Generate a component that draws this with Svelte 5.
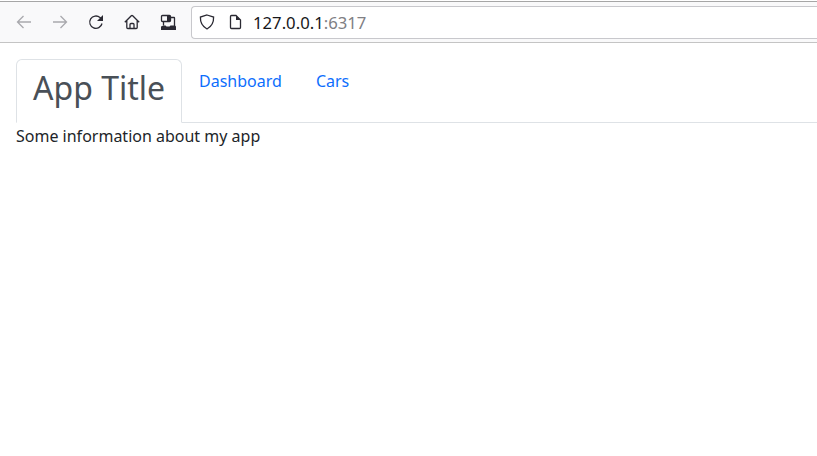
<script>
  const tabs = ['Dashboard', 'Cars'];
</script>

<div class="toolbar">
  <div class="buttons">
    <svg class="btn dim" width="16" height="16" viewBox="0 0 16 16"><path d="M15 8H1.500M7.500 2 1.500 8l6 6" /></svg>
    <svg class="btn dim" width="16" height="16" viewBox="0 0 16 16"><path d="M1 8h13.500M8.500 2l6 6-6 6" /></svg>
    <svg class="btn" width="16" height="16" viewBox="0 0 16 16"><path d="M14 9.500A6.200 6.200 0 1 1 12 3.500L14 5.500" /><path class="fill" d="M15 1v6H9z" /></svg>
    <svg class="btn" width="16" height="16" viewBox="0 0 16 16"><path d="M.8 8.300 7.300 1.800a1 1 0 0 1 1.400 0l6.500 6.500M2.800 6.500v7a1 1 0 0 0 1 1h8.400a1 1 0 0 0 1-1v-7M6 14.500V10.500a1 1 0 0 1 1-1h2a1 1 0 0 1 1 1v4" /></svg>
    <svg class="btn" width="16" height="16" viewBox="0 0 16 16"><path d="M2.500 1.500h7a1 1 0 0 1 1 1v4a1 1 0 0 1-1 1h-7a1 1 0 0 1-1-1v-4a1 1 0 0 1 1-1zM3.500 7.500v4M10.500 3.500h3.500a.5.500 0 0 1 .5.500v8" /><path class="fill" d="M7 2h3v5H7zM3.500 11.500h2l1 1h3l1-1h4.500l1 1V16H1v-3.500z" /></svg>
  </div>
  <div class="urlbar">
    <svg class="shield" width="16" height="16" viewBox="0 0 16 16"><path d="M8 1 14.600 3.100c.2 5.400-2 9.500-6.600 11.900C3.400 12.600 1.200 8.500 1.400 3.100z" /></svg>
    <svg class="doc" width="16" height="16" viewBox="0 0 16 16"><path d="M4.500 1.500h4.500l4.500 4.500v7.500a1 1 0 0 1-1 1H4.500a1 1 0 0 1-1-1v-11a1 1 0 0 1 1-1z" /><path class="fill" d="M9 1.500 13.500 6H9z" /></svg>
    <span class="url">127.0.0.1<span class="port">:6317</span></span>
  </div>
</div>

<div class="page">
  <ul class="nav">
    <li class="title">App Title</li>
    {#each tabs as tab}
      <li><a href="#top" class="link">{tab}</a></li>
    {/each}
  </ul>
  <p>Some information about my app</p>
</div>

<style>
  :global(body) {
    background: #fff;
    font-family: "Noto Sans", "Open Sans", sans-serif;
    overflow: hidden;
  }
  .toolbar {
    box-sizing: border-box;
    height: 42px;
    margin-top: 1px;
    display: flex;
    align-items: center;
    gap: 15px;
    padding-left: 16px;
    background: #f9f9fa;
    border-top: 1px solid #a6a6a6;
    border-bottom: 1px solid #c4c4c4;
  }
  .buttons {
    display: flex;
    gap: 20px;
  }
  .btn {
    flex: none;
  }
  svg path {
    fill: none;
    stroke: #2b2a33;
    stroke-width: 1.3;
  }
  svg path.fill {
    fill: #2b2a33;
    stroke: none;
  }
  .btn.dim path {
    stroke: #a9a9ad;
  }
  .urlbar {
    flex: 1;
    height: 33px;
    margin-right: -8px;
    display: flex;
    align-items: center;
    box-sizing: border-box;
    padding-left: 7px;
    background: #fff;
    border: 1px solid #c8c8cc;
    border-right: none;
    border-radius: 4px 0 0 4px;
  }
  .doc {
    margin-left: 12px;
  }
  .url {
    margin-left: 10px;
    font-size: 16.7px;
    color: #17171a;
  }
  .port {
    color: #808084;
  }
  .page {
    padding: 16px 0 0 16px;
  }
  .nav {
    list-style: none;
    margin: 0;
    padding: 0;
    display: flex;
    height: 64px;
    box-sizing: border-box;
    border-bottom: 1px solid #dee2e6;
  }
  .nav li {
    box-sizing: border-box;
  }
  .title {
    height: 64px;
    padding: 6px 16px 0;
    font-size: 32px;
    line-height: 44px;
    color: #495057;
    background: #fff;
    border: 1px solid #dee2e6;
    border-bottom-color: #fff;
    border-radius: 6px 6px 0 0;
  }
  .link {
    display: block;
    padding: 8px 17px;
    font-size: 16px;
    line-height: 28px;
    color: #0d6efd;
    text-decoration: none;
  }
  p {
    margin: 0;
    font-size: 16px;
    line-height: 26px;
    color: #212529;
  }
</style>
